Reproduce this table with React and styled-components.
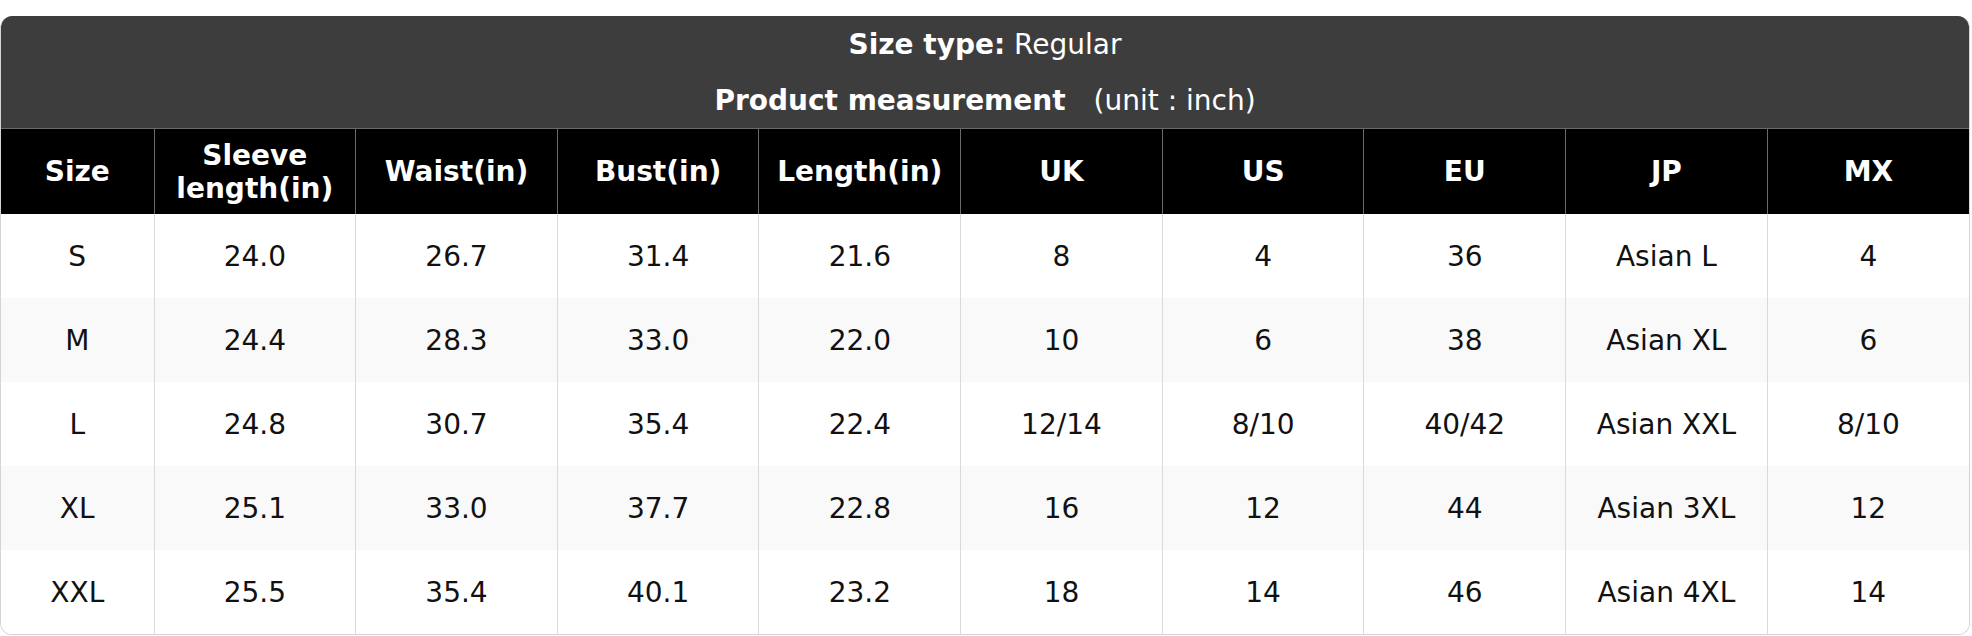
import React from 'react';
import styled, { createGlobalStyle } from 'styled-components';

const GlobalStyle = createGlobalStyle`
  body {
    margin: 0;
    background: #ffffff;
    font-family: "DejaVu Sans", "Liberation Sans", sans-serif;
  }
`;

const Frame = styled.div`
  width: 1970px;
  margin-top: 16px;
  border: 1px solid #d4d4d4;
  border-top: none;
  border-radius: 12px;
  overflow: hidden;
  box-sizing: border-box;
`;

const Table = styled.table`
  width: 100%;
  border-collapse: collapse;
  table-layout: fixed;
  font-size: 28px;
  color: #111;
`;

const TitleCell = styled.th`
  background: #3d3d3d;
  color: #ffffff;
  height: ${(p) => p.$h}px;
  padding: 0;
  font-weight: 400;
  text-align: center;
  vertical-align: middle;
  border-bottom: ${(p) => (p.$last ? '1px solid #6a6a6a' : 'none')};
`;

const Strong = styled.b`
  font-weight: 700;
`;

const Unit = styled.span`
  margin-left: 28px;
`;

const HeadCell = styled.th`
  background: #000000;
  color: #ffffff;
  height: 85px;
  padding: 0 10px;
  font-weight: 700;
  line-height: 33px;
  text-align: center;
  vertical-align: middle;
  border-left: 1px solid #6a6a6a;
  &:first-child {
    border-left: none;
  }
`;

const Row = styled.tr`
  background: ${(p) => (p.$striped ? '#f9f9f9' : '#ffffff')};
`;

const Cell = styled.td`
  height: 84px;
  padding: 0 8px;
  text-align: center;
  vertical-align: middle;
  border-left: 1px solid #dadada;
  &:first-child {
    border-left: none;
  }
`;

const headers = [
  'Size',
  'Sleeve length(in)',
  'Waist(in)',
  'Bust(in)',
  'Length(in)',
  'UK',
  'US',
  'EU',
  'JP',
  'MX',
];

const rows = [
  ['S', '24.0', '26.7', '31.4', '21.6', '8', '4', '36', 'Asian L', '4'],
  ['M', '24.4', '28.3', '33.0', '22.0', '10', '6', '38', 'Asian XL', '6'],
  ['L', '24.8', '30.7', '35.4', '22.4', '12/14', '8/10', '40/42', 'Asian XXL', '8/10'],
  ['XL', '25.1', '33.0', '37.7', '22.8', '16', '12', '44', 'Asian 3XL', '12'],
  ['XXL', '25.5', '35.4', '40.1', '23.2', '18', '14', '46', 'Asian 4XL', '14'],
];

export default function App() {
  return (
    <>
      <GlobalStyle />
      <Frame>
        <Table>
          <colgroup>
            <col style={{ width: 153 }} />
            {headers.slice(1).map((h) => (
              <col key={h} />
            ))}
          </colgroup>
          <thead>
            <tr>
              <TitleCell colSpan={10} $h={56}>
                <Strong>Size type:</Strong> Regular
              </TitleCell>
            </tr>
            <tr>
              <TitleCell colSpan={10} $h={56} $last>
                <Strong>Product measurement</Strong>
                <Unit>(unit : inch)</Unit>
              </TitleCell>
            </tr>
            <tr>
              {headers.map((h) => (
                <HeadCell key={h}>{h}</HeadCell>
              ))}
            </tr>
          </thead>
          <tbody>
            {rows.map((r, i) => (
              <Row key={r[0]} $striped={i % 2 === 1}>
                {r.map((v, j) => (
                  <Cell key={j}>{v}</Cell>
                ))}
              </Row>
            ))}
          </tbody>
        </Table>
      </Frame>
    </>
  );
}
